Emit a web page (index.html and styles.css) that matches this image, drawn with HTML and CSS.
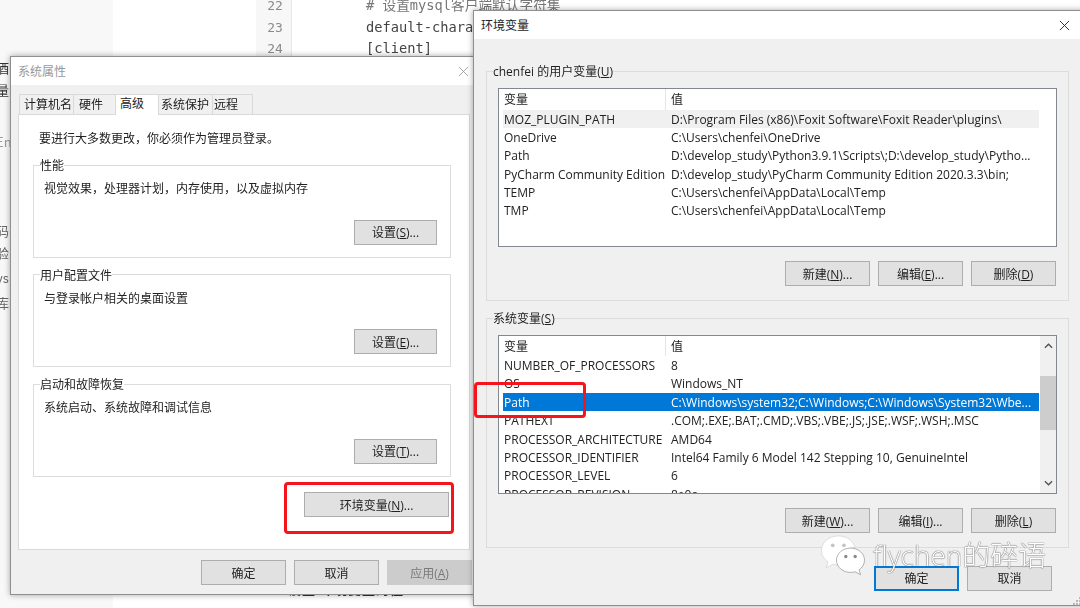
FILE: index.html
```html
<!DOCTYPE html>
<html lang="zh">
<head>
<meta charset="utf-8">
<title>环境变量</title>
<link rel="stylesheet" href="styles.css">
</head>
<body>
<div class="desktop">
  <div class="bg">
    <div class="bg-side">
      <span>酒</span><span>量</span><span class="en">En</span><span>码</span><span>验</span><span class="en">ys</span><span>库</span>
    </div>
    <div class="bg-blank"></div>
    <div class="bg-gutter"><span>22</span><span>23</span><span>24</span></div>
    <div class="bg-code"><span># 设置mysql客户端默认字符集</span><span>default-character-set=utf8</span><span>[client]</span></div>
  </div>
  <span class="bg-foot">· 设置 环境变量的值 ·</span>

  <section class="win win-sys">
    <header class="titlebar"><span class="title muted">系统属性</span>
      <svg class="close" viewBox="0 0 12 12"><path d="M1 1l10 10M11 1L1 11" stroke="#a0a0a0" fill="none"/></svg>
    </header>
    <div class="sys-body">
      <div class="tabs">
        <span class="tab">计算机名</span><span class="tab">硬件</span><span class="tab active">高级</span><span class="tab">系统保护</span><span class="tab">远程</span>
      </div>
      <div class="panel">
        <p class="notice">要进行大多数更改，你必须作为管理员登录。</p>
        <fieldset class="group sys-group">
          <legend>性能</legend>
          <p>视觉效果，处理器计划，内存使用，以及虚拟内存</p>
          <div class="actions"><button class="btn">设置(<u>S</u>)...</button></div>
        </fieldset>
        <fieldset class="group sys-group">
          <legend>用户配置文件</legend>
          <p>与登录帐户相关的桌面设置</p>
          <div class="actions"><button class="btn">设置(<u>E</u>)...</button></div>
        </fieldset>
        <fieldset class="group sys-group">
          <legend>启动和故障恢复</legend>
          <p>系统启动、系统故障和调试信息</p>
          <div class="actions"><button class="btn">设置(<u>T</u>)...</button></div>
        </fieldset>
        <div class="env-row"><button class="btn btn-env">环境变量(<u>N</u>)...</button></div>
      </div>
      <div class="sys-foot">
        <button class="btn">确定</button><button class="btn">取消</button><button class="btn disabled">应用(<u>A</u>)</button>
      </div>
    </div>
    <div class="mark mark-env"></div>
  </section>

  <section class="win win-env">
    <header class="titlebar"><span class="title">环境变量</span>
      <svg class="close" viewBox="0 0 12 12"><path d="M1 1l10 10M11 1L1 11" stroke="#222" fill="none"/></svg>
    </header>
    <div class="env-body">
      <fieldset class="group env-group">
        <legend>chenfei 的用户变量(<u>U</u>)</legend>
        <div class="list">
          <div class="list-main">
            <div class="row head"><span class="c1">变量</span><span class="c2">值</span></div>
            <div class="row hover"><span class="c1">MOZ_PLUGIN_PATH</span><span class="c2">D:\Program Files (x86)\Foxit Software\Foxit Reader\plugins\</span></div>
            <div class="row"><span class="c1">OneDrive</span><span class="c2">C:\Users\chenfei\OneDrive</span></div>
            <div class="row"><span class="c1">Path</span><span class="c2">D:\develop_study\Python3.9.1\Scripts\;D:\develop_study\Pytho...</span></div>
            <div class="row"><span class="c1">PyCharm Community Edition</span><span class="c2">D:\develop_study\PyCharm Community Edition 2020.3.3\bin;</span></div>
            <div class="row"><span class="c1">TEMP</span><span class="c2">C:\Users\chenfei\AppData\Local\Temp</span></div>
            <div class="row"><span class="c1">TMP</span><span class="c2">C:\Users\chenfei\AppData\Local\Temp</span></div>
          </div>
        </div>
        <div class="actions env-actions"><button class="btn">新建(<u>N</u>)...</button><button class="btn">编辑(<u>E</u>)...</button><button class="btn">删除(<u>D</u>)</button></div>
      </fieldset>
      <fieldset class="group env-group env-group-2">
        <legend>系统变量(<u>S</u>)</legend>
        <div class="list">
          <div class="list-main">
            <div class="row head"><span class="c1">变量</span><span class="c2">值</span></div>
            <div class="row"><span class="c1">NUMBER_OF_PROCESSORS</span><span class="c2">8</span></div>
            <div class="row"><span class="c1">OS</span><span class="c2">Windows_NT</span></div>
            <div class="row selected"><span class="c1">Path</span><span class="c2">C:\Windows\system32;C:\Windows;C:\Windows\System32\Wbe...</span></div>
            <div class="row"><span class="c1">PATHEXT</span><span class="c2">.COM;.EXE;.BAT;.CMD;.VBS;.VBE;.JS;.JSE;.WSF;.WSH;.MSC</span></div>
            <div class="row"><span class="c1">PROCESSOR_ARCHITECTURE</span><span class="c2">AMD64</span></div>
            <div class="row"><span class="c1">PROCESSOR_IDENTIFIER</span><span class="c2">Intel64 Family 6 Model 142 Stepping 10, GenuineIntel</span></div>
            <div class="row"><span class="c1">PROCESSOR_LEVEL</span><span class="c2">6</span></div>
            <div class="row"><span class="c1">PROCESSOR_REVISION</span><span class="c2">8e0a</span></div>
          </div>
          <div class="scroll">
            <svg viewBox="0 0 10 6" class="arrow"><path d="M1 5l4-4 4 4" stroke="#505050" stroke-width="1.4" fill="none"/></svg>
            <div class="thumb"></div>
            <svg viewBox="0 0 10 6" class="arrow"><path d="M1 1l4 4 4-4" stroke="#505050" stroke-width="1.4" fill="none"/></svg>
          </div>
        </div>
        <div class="actions env-actions"><button class="btn">新建(<u>W</u>)...</button><button class="btn">编辑(<u>I</u>)...</button><button class="btn">删除(<u>L</u>)</button></div>
      </fieldset>
      <div class="env-foot"><button class="btn primary">确定</button><button class="btn">取消</button></div>
    </div>
    <div class="mark mark-path"></div>
    <svg class="grip" viewBox="0 0 8 8"><path d="M6 0h2v2H6zM3 3h2v2H3zM6 3h2v2H6zM0 6h2v2H0zM3 6h2v2H3zM6 6h2v2H6z" fill="#b8b8b8"/></svg>
  </section>

  <div class="watermark">
    <svg class="wechat" viewBox="0 0 48 46">
      <path d="M19 1C9 1 1 8 1 16.500c0 5 2.700 9.300 7 12.200L6 35l7.200-3.800c1.800.5 3.700.8 5.800.8 1 0 2-.1 3-.2C21 29 21 27 21.500 25 23.500 17.500 30 13 37 13.300 35 6 27.800 1 19 1z" fill="#fff" stroke="#c9c9c9" stroke-width=".6"/>
      <path d="M47 27c0-7.500-7-13-15-13s-15 5.500-15 13 7 13 15 13c1.700 0 3.300-.2 4.800-.7l6 3.200-1.700-5.200C44.800 34.800 47 31.100 47 27z" fill="#fff" stroke="#8a8a8a" stroke-width=".7"/>
      <circle cx="13" cy="11" r="2" fill="#c4c4c4"/><circle cx="25" cy="11" r="2" fill="#c4c4c4"/>
      <circle cx="27" cy="23" r="1.800" fill="#8a8a8a"/><circle cx="37" cy="23" r="1.800" fill="#8a8a8a"/>
    </svg>
    <span class="wm-text">flychen的碎语</span>
  </div>
</div>
</body>
</html>
```
FILE: styles.css
```css
* { box-sizing: border-box; }
html, body { margin: 0; padding: 0; }
body { width: 1080px; height: 608px; overflow: hidden; background: #fff; }
.desktop {
  position: relative; width: 1080px; height: 608px; overflow: hidden;
  font-family: "Open Sans", "Noto Sans CJK SC", sans-serif;
  font-size: 12px; color: #222; filter: blur(0.45px);
}
.bg { display: flex; height: 100%; }
.bg-side { width: 113px; background: #f8f8f8; display: flex; flex-direction: column; font-size: 13px; font-family: "Noto Sans CJK SC", sans-serif; padding-top: 58px; }
.bg-side span { height: 22px; margin-left: -4px; color: #333; }
.bg-side span:nth-child(3) { margin-top: 30px; color: #999; }
.bg-side span:nth-child(4) { margin-top: 67px; color: #666; }
.bg-side span:nth-child(n+5) { color: #666; height: 25px; }
.bg-blank { width: 143px; background: #fff; }
.bg-gutter { width: 36px; height: 70px; background: #f7f7f7; border-right: 1px solid #e7e7e7; display: flex; flex-direction: column; align-items: center; color: #8a8a8a; font: 13px/21.500px "DejaVu Sans Mono", monospace; padding-left: 3px; margin-top: -5px; }
.bg-code { flex: 1; display: flex; flex-direction: column; padding-left: 74px; margin-top: -5px; font: 13.700px/21.500px "DejaVu Sans Mono", "Noto Sans CJK SC", monospace; color: #444; white-space: nowrap; }
.bg-code span:first-child { color: #777; }
.bg-foot { position: absolute; left: 270px; top: 582px; font: 700 13px/14px "Noto Sans CJK SC", sans-serif; color: #333; letter-spacing: 1px; white-space: nowrap; }

.win { position: absolute; background: #f0f0f0; display: flex; flex-direction: column; box-shadow: 0 0 6px rgba(0,0,0,.35); border: 1px solid #8f8f8f; }
.win-sys { left: 10px; top: 56px; width: 466px; height: 539px; }
.win-env { left: 473px; top: 10px; width: 620px; height: 596px; }
.titlebar { height: 28px; flex: none; background: #fff; display: flex; align-items: center; justify-content: space-between; padding: 0 6px 0 7px; }
.win-env .titlebar { padding-right: 22px; }
.title { font-size: 12px; }
.title.muted { color: #999; }
.close { width: 11px; height: 11px; }

.sys-body { flex: 1; display: flex; flex-direction: column; padding: 8px 0 0 7px; }
.tabs { display: flex; height: 21px; align-items: flex-end; padding-left: 1px; }
.tab { height: 20px; line-height: 19px; background: #f0f0f0; border: 1px solid #d9d9d9; border-bottom: 0; margin-right: -1px; white-space: nowrap; padding-left: 4px; }
.tab:nth-child(1) { width: 55px; }
.tab:nth-child(2) { width: 43px; padding-left: 5px; }
.tab:nth-child(3) { width: 44px; }
.tab:nth-child(4) { width: 55px; padding-left: 2px; }
.tab:nth-child(5) { width: 41px; padding-left: 1px; }
.tab.active { height: 21px; background: #fff; line-height: 18px; position: relative; z-index: 1; margin-bottom: -1px; }
.panel { width: 452px; height: 436px; background: #fff; border: 1px solid #d9d9d9; padding: 0 18px 0 14px; display: flex; flex-direction: column; }
.notice { margin: 15px 0 10px 6px; height: 17px; line-height: 17px; }
.group { margin: 0; min-width: 0; border: 1px solid #dcdcdc; padding: 0; }
.group legend { padding: 0; line-height: 18px; height: 16px; white-space: nowrap; }
.group p { margin: 0; line-height: 17px; }
.sys-group { height: 100.500px; margin-bottom: 9px; padding: 7px 13px 0 10px; }
.sys-group legend { margin-left: -4px; }
.sys-group .actions { margin-top: 22.500px; }
.actions { display: flex; justify-content: flex-end; }
.btn { height: 25px; width: 83px; padding: 0; background: #e1e1e1; border: 1px solid #adadad; font: inherit; color: #222; flex: none; white-space: nowrap; }
.btn.disabled { background: #cccccc; border-color: #cccccc; color: #7a7a7a; }
.btn.primary { border: 2px solid #0078d7; }
.env-row { display: flex; justify-content: flex-end; margin-right: 2px; }
.btn-env { width: 145px; margin-top: 6.500px; }
.sys-foot { display: flex; gap: 8px; padding: 10px 0 0 183px; width: 500px; }
.sys-foot .btn { width: 85px; }

.env-body { flex: 1; display: flex; flex-direction: column; padding: 0 0 0 12px; width: 596px; }
.env-group { width: 583px; padding: 9px 11px 0 11px; height: 238px; margin-top: 24px; flex: none; }
.env-group legend { margin-left: -5px; }
.env-group-2 { margin-top: 9px; padding-top: 8.500px; }
.env-group > .actions { margin-top: 14px; gap: 8px; padding-right: 1px; }
.env-group-2 > .actions { margin-top: 14.500px; }
.env-group > .actions .btn { width: 85px; }
.list { height: 159px; background: #fff; border: 1px solid #828790; display: flex; overflow: hidden; }
.list-main { width: 540px; padding-left: 4px; overflow: hidden; flex: none; }
.row { display: flex; height: 18.400px; line-height: 19px; white-space: nowrap; }
.row.head { height: 20.500px; line-height: 21px; }
.head .c1 { border-right: 1px solid #e5e5e5; }
.c1 { width: 163px; padding-left: 1px; flex: none; overflow: hidden; }
.c2 { padding-left: 5px; }
.row.hover { background: #f0f0f0; }
.row.selected { background: #0078d7; color: #fff; }
.scroll { width: 16px; margin-left: 1px; flex: none; background: #f0f0f0; display: flex; flex-direction: column; align-items: center; justify-content: space-between; padding: 7px 0; position: relative; }
.arrow { width: 9px; height: 6px; }
.thumb { position: absolute; left: 0; top: 40px; width: 16px; height: 54px; background: #cdcdcd; }
.env-foot { display: flex; gap: 8px; padding: 18px 0 0 388px; }
.env-foot .btn { width: 85px; height: 24.500px; }

.mark { position: absolute; border: 3px solid #f5141c; border-radius: 4px; }
.mark-env { left: 273px; top: 425px; width: 170px; height: 52px; }
.mark-path { left: 0px; top: 371px; width: 112px; height: 36px; }
.grip { position: absolute; left: 599px; top: 586px; width: 8px; height: 8px; }

.watermark { position: absolute; left: 819px; top: 535px; display: flex; align-items: center; gap: 6px; }
.wechat { width: 48px; height: 43px; }
.wm-text { color: #fff; font-size: 28px; line-height: 36px; font-family: "Open Sans", "Noto Sans CJK SC", sans-serif; font-weight: 300; white-space: nowrap; text-shadow: 0 0 1px #555, 0 0 1px #555; margin-top: -4px; }
```
